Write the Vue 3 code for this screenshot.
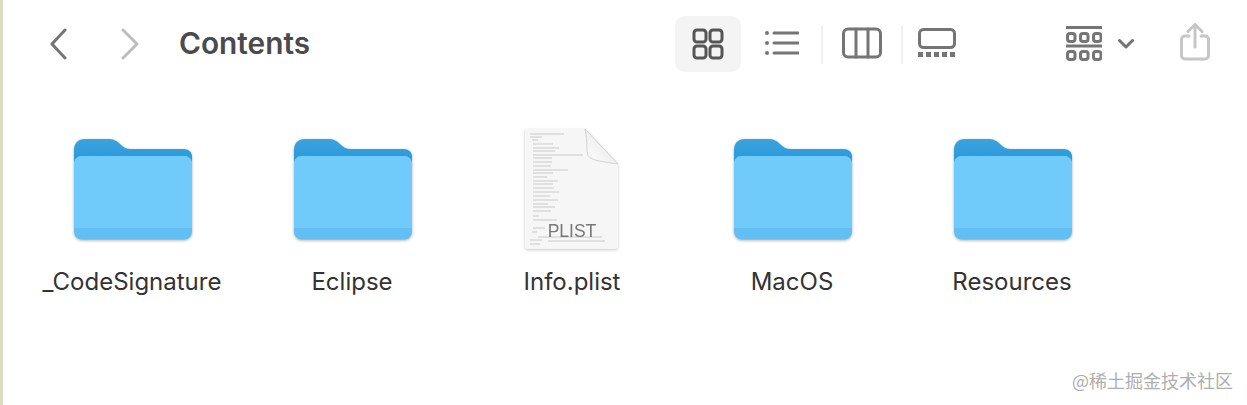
<script setup>
const items = [
  { name: '_CodeSignature', type: 'folder' },
  { name: 'Eclipse', type: 'folder' },
  { name: 'Info.plist', type: 'file' },
  { name: 'MacOS', type: 'folder' },
  { name: 'Resources', type: 'folder' }
]
const dots = [0, 1, 2]
// decorative miniature of the plist's text [x, y, length]
const lines = [
  [6, 6, 34], [6, 9, 12], [8, 12, 6], [9, 16, 20], [9, 20, 26], [9, 23, 22], [9, 27, 50], [9, 30, 19], [9, 34, 19], [9, 38, 18],
  [9, 42, 35], [9, 45, 20], [9, 49, 14], [9, 53, 25], [9, 56, 20], [9, 60, 21], [9, 64, 26], [9, 68, 17], [9, 72, 25], [9, 76, 15],
  [9, 79, 22], [9, 83, 18], [9, 88, 6], [9, 92, 24], [9, 100, 12], [8, 104, 5], [14, 109, 64], [6, 112, 12], [24, 113, 57], [6, 116, 10]
]
</script>

<template>
  <div class="window">
    <header class="toolbar">
      <svg class="ic back" width="18" height="32" viewBox="0 0 18 32"><path d="M16 2 3 16l13 14" /></svg>
      <svg class="ic forward" width="20" height="32" viewBox="0 0 20 32"><path d="M3 2l14 14L3 30" /></svg>
      <h1 class="title">Contents</h1>

      <div class="active">
        <svg class="ic" width="32" height="32" viewBox="0 0 32 32">
          <rect x="2" y="2" width="12" height="12" rx="3" />
          <rect x="18" y="2" width="12" height="12" rx="3" />
          <rect x="2" y="18" width="12" height="12" rx="3" />
          <rect x="18" y="18" width="12" height="12" rx="3" />
        </svg>
      </div>

      <svg class="ic list" width="35" height="26" viewBox="0 0 35 26">
        <circle cx="3" cy="3" r="2" class="fill" />
        <circle cx="3" cy="13" r="2" class="fill" />
        <circle cx="3" cy="23" r="2" class="fill" />
        <path d="M10 3h24M10 13h24M10 23h24" />
      </svg>
      <i class="sep first"></i>
      <svg class="ic columns" width="40" height="32" viewBox="0 0 40 32">
        <rect x="1.500" y="2" width="37" height="28" rx="4.500" />
        <path d="M14 2v28M26 2v28" />
      </svg>
      <i class="sep second"></i>
      <svg class="ic gallery" width="38" height="30" viewBox="0 0 38 30">
        <rect x="1.500" y="1.500" width="35" height="18" rx="4" />
        <path class="fill" d="M0 24h5v5H0zM8 24h5v5H8zM16 24h5v5h-5zM24 24h5v5h-5zM32 24h5v5h-5z" />
      </svg>

      <svg class="ic group" width="36" height="36" viewBox="0 0 36 36">
        <path d="M0 1.500h36M0 20h36" />
        <g v-for="row in [7, 25]" :key="row">
          <rect v-for="d in dots" :key="d" :x="1.5 + d * 13" :y="row + 0.5" width="7.500" height="8" rx="2.500" />
        </g>
      </svg>
      <svg class="ic caret" width="16" height="10" viewBox="0 0 16 10"><path d="M1.500 1.500 8 8l6.500-6.500" /></svg>

      <svg class="ic share" width="30" height="38" viewBox="0 0 30 38">
        <path d="M9 13H5a3.500 3.500 0 0 0-3.500 3.500v16A3.500 3.500 0 0 0 5 36h20a3.500 3.500 0 0 0 3.500-3.500v-16A3.500 3.500 0 0 0 25 13h-4" />
        <path d="M15 24V2M8 8.500 15 1.500l7 7" />
      </svg>
    </header>

    <main class="grid">
      <figure v-for="item in items" :key="item.name" class="item">
        <div class="thumb">
          <svg v-if="item.type === 'folder'" class="folder" width="122" height="104" viewBox="0 0 122 104">
            <defs>
              <linearGradient id="tabGrad" x1="0" y1="0" x2="0" y2="1">
                <stop offset="0" stop-color="#3ba3de" />
                <stop offset="1" stop-color="#1b92d8" />
              </linearGradient>
            </defs>
            <path d="M2 13C2 5 6 1 13 1h23c6 0 9 2 12 5 3 3 6 5 11 5h52c6 0 9 3 9 8v20H2z" fill="url(#tabGrad)" />
            <rect x="2" y="18" width="118" height="83.500" rx="8" fill="#61bff3" />
            <path d="M2 26c0-5 3-8 8-8h102c5 0 8 3 8 8v64H2z" fill="#70cbfb" />
          </svg>
          <svg v-else class="doc" width="96" height="122" viewBox="0 0 96 122">
            <defs>
              <linearGradient id="curlGrad" x1="0" y1="1" x2="1" y2="0">
                <stop offset="0" stop-color="#ffffff" />
                <stop offset=".55" stop-color="#efefef" />
                <stop offset="1" stop-color="#bdbdbd" />
              </linearGradient>
            </defs>
            <path d="M3 1h58l33 35v82a3 3 0 0 1-3 3H4a3 3 0 0 1-3-3V3a2 2 0 0 1 2-2z" fill="#f6f6f6" />
            <path d="M61 1c3 14 1 22 3 26 2 5 10 6 30 9z" fill="url(#curlGrad)" stroke="#d2d2d2" stroke-width="1" />
            <path v-for="(l, i) in lines" :key="i" :d="`M${l[0]} ${l[1]}h${l[2]}`" class="mini" />
            <text x="48" y="109" text-anchor="middle" class="plist">PLIST</text>
          </svg>
        </div>
        <figcaption class="label">{{ item.name }}</figcaption>
      </figure>
    </main>

    <div class="mark">@稀土掘金技术社区</div>
  </div>
</template>

<style>
html, body { margin: 0; background: #fff; overflow: hidden; }
</style>

<style scoped>
.window {
  position: relative;
  box-sizing: border-box;
  width: 1247px;
  height: 405px;
  border-left: 3px solid #dcdcc2;
  background: #fff;
  overflow: hidden;
  font-family: Inter, "Liberation Sans", sans-serif;
}
.toolbar {
  display: flex;
  align-items: center;
  height: 88px;
}
.ic { flex: none; fill: none; stroke: #757575; stroke-width: 3; stroke-linecap: round; stroke-linejoin: round; }
.ic .fill { fill: #757575; stroke: none; }
.back { margin-left: 46px; }
.forward { margin-left: 53px; stroke: #bdbdbd; }
.title {
  margin: -2px 0 0 39px;
  width: 496px;
  flex: none;
  font-size: 29.8px;
  font-weight: 600;
  color: #4b4b4b;
}
.active {
  flex: none;
  width: 66px;
  height: 56px;
  border-radius: 10px;
  background: #f4f4f4;
  display: flex;
  align-items: center;
  justify-content: center;
}
.active .ic { stroke: #555; }
.list { margin-left: 23px; margin-top: -2px; }
.sep { flex: none; width: 2px; height: 39px; background: #f0f0f0; }
.sep.first { margin-left: 22px; }
.columns { margin-left: 19px; margin-top: -2px; }
.sep.second { margin-left: 19px; }
.gallery { margin-left: 15px; margin-top: -2px; }
.group { margin-left: 110px; margin-top: -1px; }
.caret { margin-left: 16px; }
.share { margin-left: 46px; margin-top: -4px; stroke: #c6c6c6; }
.grid {
  display: flex;
  padding-left: 19px;
}
.item {
  margin: 0;
  width: 220px;
  flex: none;
  display: flex;
  flex-direction: column;
  align-items: center;
}
.thumb {
  height: 124px;
  margin-top: 38px;
  display: flex;
  align-items: flex-end;
  justify-content: center;
}
.folder {
  margin: 0 0 8px 2px;
  filter: drop-shadow(0 1.5px 1.5px rgba(60, 70, 80, .45));
}
.doc { filter: drop-shadow(0 1px 1.5px rgba(0, 0, 0, .22)); }
.label {
  margin-top: 17px;
  font-size: 24px;
  line-height: 30px;
  color: #333;
  white-space: nowrap;
}
.mini { stroke: #b0b0b0; stroke-width: .6; fill: none; }
.plist { font-family: "Liberation Sans", sans-serif; font-size: 17.5px; fill: #777; }
.mark {
  position: absolute;
  right: 14px;
  top: 368px;
  font-family: "Noto Sans CJK SC", sans-serif;
  font-size: 18px;
  line-height: 24px;
  color: #aeaeae;
}
</style>
